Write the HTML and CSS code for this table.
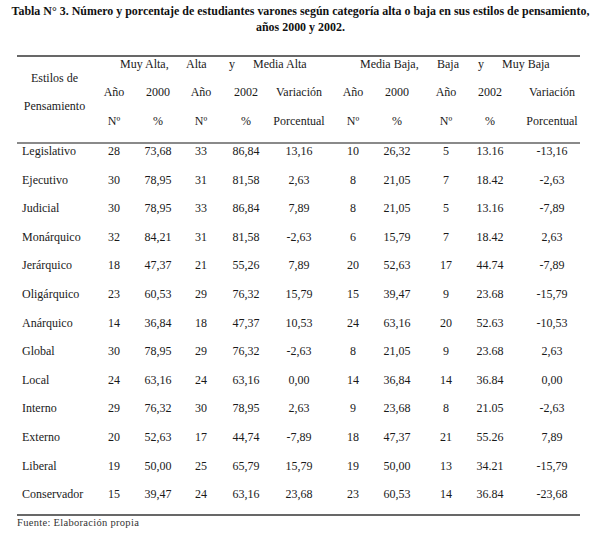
FILE: index.html
```html
<!DOCTYPE html>
<html>
<head>
<meta charset="utf-8">
<title>Tabla N° 3</title>
<link rel="stylesheet" href="styles.css">
</head>
<body>
<div class="title"><div class="title-inner">Tabla N° 3. Número y porcentaje de estudiantes varones según categoría alta o baja en sus estilos de pensamiento,<br>años 2000 y 2002.</div></div>
<div class="table">
  <div class="rule thick"></div>
  <div class="grid head">
    <div class="estilos">Estilos de<br>Pensamiento</div>
    <div class="g g-muyalta">Muy Alta,</div>
    <div class="g g-alta">Alta</div>
    <div class="g g-y1">y</div>
    <div class="g g-mediaalta">Media Alta</div>
    <div class="g g-mediabaja">Media Baja,</div>
    <div class="g g-baja">Baja</div>
    <div class="g g-y2">y</div>
    <div class="g g-muybaja">Muy Baja</div>
    <div class="c r2 c2">Año</div><div class="c r2 c3">2000</div><div class="c r2 c4">Año</div><div class="c r2 c5">2002</div><div class="c r2 c6">Variación</div>
    <div class="c r2 c7">Año</div><div class="c r2 c8">2000</div><div class="c r2 c9">Año</div><div class="c r2 c10">2002</div><div class="c r2 c11">Variación</div>
    <div class="c r3 c2">Nº</div><div class="c r3 c3">%</div><div class="c r3 c4">Nº</div><div class="c r3 c5">%</div><div class="c r3 c6">Porcentual</div>
    <div class="c r3 c7">Nº</div><div class="c r3 c8">%</div><div class="c r3 c9">Nº</div><div class="c r3 c10">%</div><div class="c r3 c11">Porcentual</div>
  </div>
  <div class="rule mid"></div>
  <div class="grid body">
    <div class="name">Legislativo</div><div class="c">28</div><div class="c">73,68</div><div class="c">33</div><div class="c">86,84</div><div class="c">13,16</div><div class="c">10</div><div class="c">26,32</div><div class="c">5</div><div class="c">13.16</div><div class="c">-13,16</div>
    <div class="name">Ejecutivo</div><div class="c">30</div><div class="c">78,95</div><div class="c">31</div><div class="c">81,58</div><div class="c">2,63</div><div class="c">8</div><div class="c">21,05</div><div class="c">7</div><div class="c">18.42</div><div class="c">-2,63</div>
    <div class="name">Judicial</div><div class="c">30</div><div class="c">78,95</div><div class="c">33</div><div class="c">86,84</div><div class="c">7,89</div><div class="c">8</div><div class="c">21,05</div><div class="c">5</div><div class="c">13.16</div><div class="c">-7,89</div>
    <div class="name">Monárquico</div><div class="c">32</div><div class="c">84,21</div><div class="c">31</div><div class="c">81,58</div><div class="c">-2,63</div><div class="c">6</div><div class="c">15,79</div><div class="c">7</div><div class="c">18.42</div><div class="c">2,63</div>
    <div class="name">Jerárquico</div><div class="c">18</div><div class="c">47,37</div><div class="c">21</div><div class="c">55,26</div><div class="c">7,89</div><div class="c">20</div><div class="c">52,63</div><div class="c">17</div><div class="c">44.74</div><div class="c">-7,89</div>
    <div class="name">Oligárquico</div><div class="c">23</div><div class="c">60,53</div><div class="c">29</div><div class="c">76,32</div><div class="c">15,79</div><div class="c">15</div><div class="c">39,47</div><div class="c">9</div><div class="c">23.68</div><div class="c">-15,79</div>
    <div class="name">Anárquico</div><div class="c">14</div><div class="c">36,84</div><div class="c">18</div><div class="c">47,37</div><div class="c">10,53</div><div class="c">24</div><div class="c">63,16</div><div class="c">20</div><div class="c">52.63</div><div class="c">-10,53</div>
    <div class="name">Global</div><div class="c">30</div><div class="c">78,95</div><div class="c">29</div><div class="c">76,32</div><div class="c">-2,63</div><div class="c">8</div><div class="c">21,05</div><div class="c">9</div><div class="c">23.68</div><div class="c">2,63</div>
    <div class="name">Local</div><div class="c">24</div><div class="c">63,16</div><div class="c">24</div><div class="c">63,16</div><div class="c">0,00</div><div class="c">14</div><div class="c">36,84</div><div class="c">14</div><div class="c">36.84</div><div class="c">0,00</div>
    <div class="name">Interno</div><div class="c">29</div><div class="c">76,32</div><div class="c">30</div><div class="c">78,95</div><div class="c">2,63</div><div class="c">9</div><div class="c">23,68</div><div class="c">8</div><div class="c">21.05</div><div class="c">-2,63</div>
    <div class="name">Externo</div><div class="c">20</div><div class="c">52,63</div><div class="c">17</div><div class="c">44,74</div><div class="c">-7,89</div><div class="c">18</div><div class="c">47,37</div><div class="c">21</div><div class="c">55.26</div><div class="c">7,89</div>
    <div class="name">Liberal</div><div class="c">19</div><div class="c">50,00</div><div class="c">25</div><div class="c">65,79</div><div class="c">15,79</div><div class="c">19</div><div class="c">50,00</div><div class="c">13</div><div class="c">34.21</div><div class="c">-15,79</div>
    <div class="name">Conservador</div><div class="c">15</div><div class="c">39,47</div><div class="c">24</div><div class="c">63,16</div><div class="c">23,68</div><div class="c">23</div><div class="c">60,53</div><div class="c">14</div><div class="c">36.84</div><div class="c">-23,68</div>
  </div>
  <div class="rule thick"></div>
</div>
<div class="source">Fuente: Elaboración propia</div>
</body>
</html>
```

FILE: styles.css
```css
html, body {
  margin: 0;
  padding: 0;
  background: #ffffff;
}
body {
  font-family: "Liberation Serif", serif;
  color: #1a1a1a;
  width: 600px;
  height: 536px;
  overflow: hidden;
}
.title {
  display: flex;
  justify-content: center;
  padding-top: 3px;
  height: 32px;
}
.title-inner {
  flex: none;
  white-space: nowrap;
  text-align: center;
  font-family: "Liberation Serif", serif;
  font-weight: bold;
  font-size: 13.5px;
  line-height: 16px;
  transform: scaleX(0.885);
  color: #111;
}
.table {
  margin-top: 20px;
  margin-left: 17px;
  width: 563px;
}
.rule {
  height: 2px;
}
.rule.thick { background: #686868; }
.rule.mid { background: #8a8a8a; }
.grid {
  display: grid;
  grid-template-columns: 75px 44px 44px 42px 48px 58px 50px 38px 60px 28px 96px;
  width: 583px;
  font-family: "Liberation Serif", serif;
  font-size: 12px;
  line-height: 14px;
}
.head {
  grid-template-rows: repeat(3, 28.33px);
  height: 85px;
}
.body {
  grid-template-rows: repeat(12, 28.6px) 26.8px;
  height: 370px;
}
.grid > div {
  white-space: nowrap;
  align-self: start;
}
.estilos {
  grid-column: 1;
  grid-row: 1 / span 3;
  text-align: center;
  line-height: 28px;
  margin-top: 7px;
}
.c { justify-self: center; }
.g { grid-row: 1; justify-self: start; }
.g-muyalta { grid-column: 2; margin-left: 28px; }
.g-alta { grid-column: 4; margin-left: 6px; }
.g-y1 { grid-column: 5; margin-left: 7px; }
.g-mediaalta { grid-column: 6; margin-left: -17px; }
.g-mediabaja { grid-column: 7; margin-left: 32px; }
.g-baja { grid-column: 9; margin-left: 21px; }
.g-y2 { grid-column: 10; margin-left: 2px; }
.g-muybaja { grid-column: 11; margin-left: -2px; }
.r2 { grid-row: 2; }
.r3 { grid-row: 3; }
.c2 { grid-column: 2; } .c3 { grid-column: 3; } .c4 { grid-column: 4; } .c5 { grid-column: 5; }
.c6 { grid-column: 6; } .c7 { grid-column: 7; } .c8 { grid-column: 8; } .c9 { grid-column: 9; }
.c10 { grid-column: 10; } .c11 { grid-column: 11; }
.name {
  padding-left: 5px;
}
.source {
  margin-left: 17px;
  padding-top: 1px;
  font-family: "Liberation Serif", serif;
  font-size: 10.5px;
  line-height: 12px;
  letter-spacing: 0.3px;
  color: #333;
}
```
